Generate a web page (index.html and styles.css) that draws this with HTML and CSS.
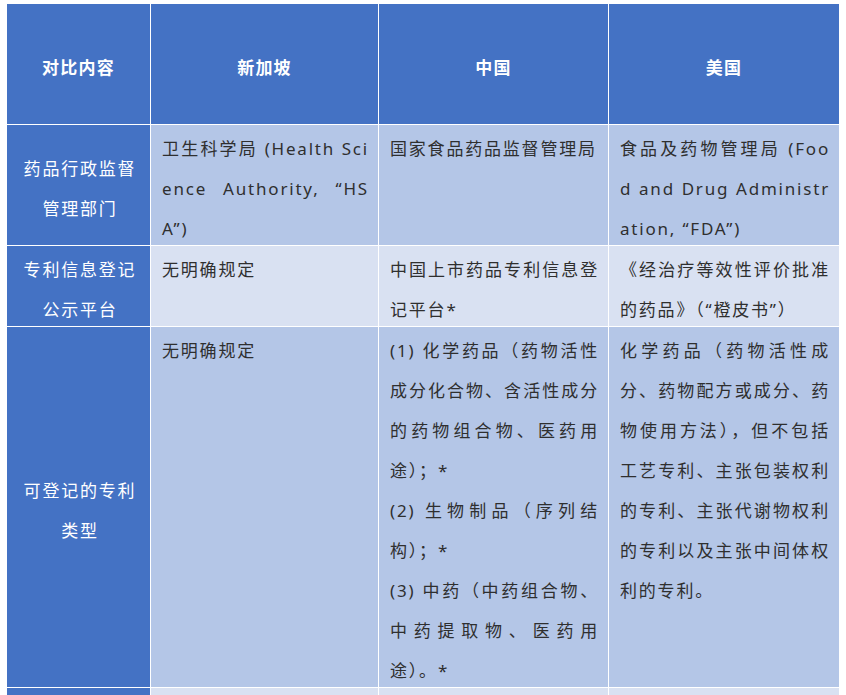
FILE: index.html
```html
<!DOCTYPE html>
<html lang="zh-CN">
<head>
<meta charset="utf-8">
<title>对比内容</title>
<link rel="stylesheet" href="styles.css">
</head>
<body>
<div class="table">
  <div class="cell head">对比内容</div>
  <div class="cell head">新加坡</div>
  <div class="cell head">中国</div>
  <div class="cell head">美国</div>

  <div class="cell side">药品行政监督管理部门</div>
  <div class="cell data dark">卫生科学局 (Health Science Authority, “HSA”)</div>
  <div class="cell data dark">国家食品药品监督管理局</div>
  <div class="cell data dark">食品及药物管理局 (Food and Drug Administration, “FDA”)</div>

  <div class="cell side">专利信息登记公示平台</div>
  <div class="cell data light">无明确规定</div>
  <div class="cell data light">中国上市药品专利信息登记平台*</div>
  <div class="cell data light">《经治疗等效性评价批准的药品》（“橙皮书”）</div>

  <div class="cell side">可登记的专利<br>类型</div>
  <div class="cell data dark">无明确规定</div>
  <div class="cell data dark">(1) 化学药品（药物活性成分化合物、含活性成分的药物组合物、医药用途）；*<br>(2) 生物制品（序列结构）；*<br>(3) 中药（中药组合物、中药提取物、医药用途）。*</div>
  <div class="cell data dark">化学药品（药物活性成分、药物配方或成分、药物使用方法），但不包括工艺专利、主张包装权利的专利、主张代谢物权利的专利以及主张中间体权利的专利。</div>

  <div class="cell side"></div>
  <div class="cell data light"></div>
  <div class="cell data light"></div>
  <div class="cell data light"></div>
</div>
</body>
</html>
```

FILE: styles.css
```css
html, body {
  margin: 0;
  padding: 0;
  background: #ffffff;
}

body {
  padding: 4px 0 0 7px;
  font-family: "Noto Sans", "Noto Sans CJK SC", sans-serif;
  font-size: 17px;
}

.table {
  display: grid;
  grid-template-columns: 143px 227px 229px 230px;
  grid-template-rows: 120px 120px 80px 360px 40px;
  gap: 1px;
  background: #ffffff;
  width: 832px;
}

.cell {
  box-sizing: border-box;
  line-height: 40px;
  letter-spacing: 1.8px;
  word-break: break-all;
}

.head {
  background: #4472c4;
  color: #ffffff;
  font-weight: bold;
  font-size: 17px;
  letter-spacing: 1.2px;
  display: flex;
  align-items: center;
  justify-content: center;
  padding-top: 7px;
  text-align: center;
}

.side {
  background: #4472c4;
  color: #ffffff;
  display: flex;
  align-items: center;
  justify-content: center;
  text-align: center;
  padding: 7px 8px 0 11px;
}

.data {
  color: #2f2f2f;
  text-align: justify;
  padding: 4px 9px 0 11px;
}

.dark {
  background: #b4c6e7;
}

.light {
  background: #d9e1f2;
}
```
